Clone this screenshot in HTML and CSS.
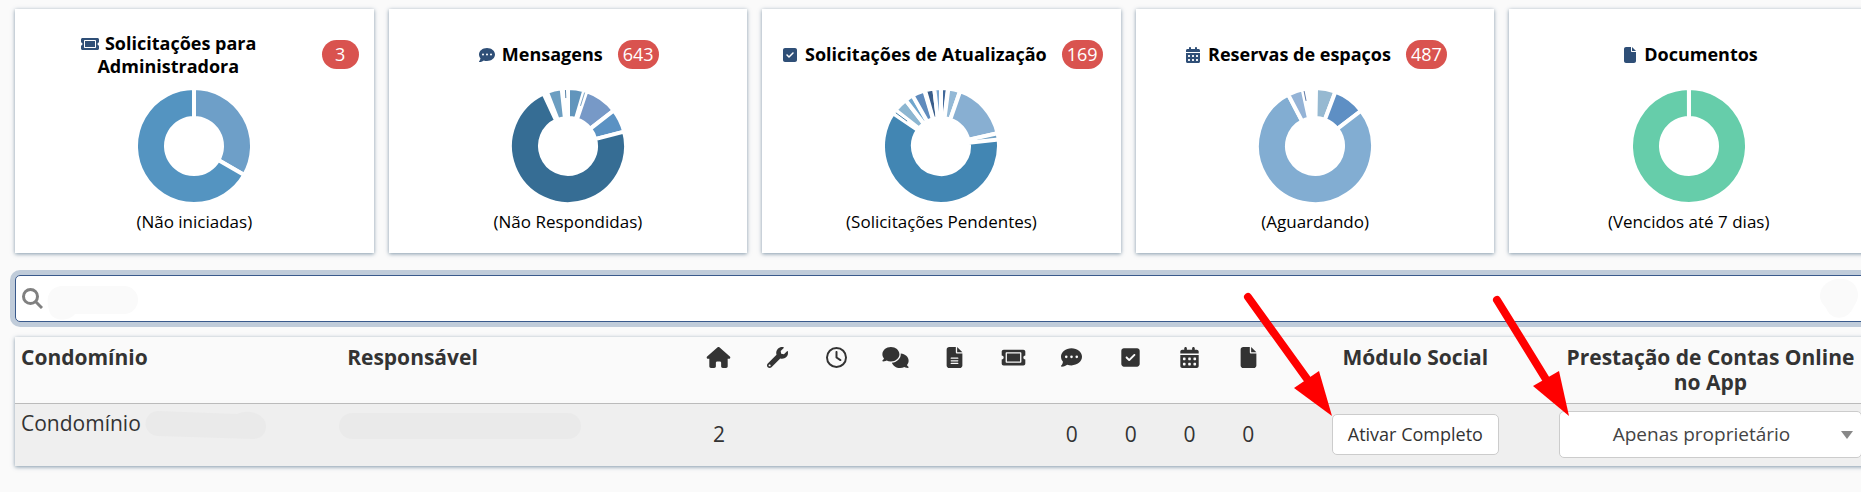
FILE: index.html
```html
<!DOCTYPE html>
<html lang="pt-BR">
<head>
  <meta charset="UTF-8" />
  <meta name="viewport" content="width=device-width, initial-scale=1.0" />
  <title>Condomínios</title>
  <link rel="stylesheet" href="styles.css">
</head>
<body>

<!-- Icon sprite -->
<svg class="sprite" aria-hidden="true">
  <symbol id="ticket" viewBox="0 0 576 512"><path d="M128 160h320v192H128V160zm400 96c0 26.51 21.49 48 48 48v96c0 26.51-21.49 48-48 48H48c-26.51 0-48-21.49-48-48v-96c26.51 0 48-21.49 48-48s-21.49-48-48-48v-96c0-26.51 21.49-48 48-48h480c26.51 0 48 21.49 48 48v96c-26.51 0-48 21.49-48 48zm-48-104c0-13.255-10.745-24-24-24H120c-13.255 0-24 10.745-24 24v208c0 13.255 10.745 24 24 24h336c13.255 0 24-10.745 24-24V152z"/></symbol>
  <symbol id="house" viewBox="0 0 576 512"><path d="M575.8 255.5c0 18-15 32.1-32 32.1h-32l.7 160.2c0 2.7-.2 5.4-.5 8.1V472c0 22.1-17.9 40-40 40H392c-22.1 0-40-17.9-40-40V384c0-17.7-14.3-32-32-32H256c-17.7 0-32 14.3-32 32v88c0 22.1-17.9 40-40 40H104c-22.1 0-40-17.9-40-40V287.6H32c-18 0-32-14-32-32.1c0-9 3-17 10-24L266.4 8c7-7 15-8 22-8s15 2 21 7L564.8 231.5c8 7 12 15 11 24z"/></symbol>
  <symbol id="wrench" viewBox="0 0 512 512"><path d="M507.73 109.1c-2.24-9.03-13.54-12.09-20.12-5.51l-74.36 74.36-67.88-11.31-11.31-67.88 74.36-74.36c6.62-6.62 3.43-17.9-5.66-20.16-47.38-11.74-99.55.91-136.58 37.93-39.64 39.64-50.55 97.1-34.05 147.2L18.74 402.76c-24.99 24.99-24.99 65.51 0 90.5 24.99 24.99 65.51 24.99 90.5 0l213.21-213.21c50.12 16.71 107.47 5.68 147.37-34.22 37.07-37.07 49.7-89.32 37.91-136.73zM64 472c-13.25 0-24-10.75-24-24 0-13.26 10.75-24 24-24s24 10.74 24 24c0 13.25-10.75 24-24 24z"/></symbol>
  <symbol id="clock" viewBox="0 0 512 512"><path d="M464 256A208 208 0 1 1 48 256a208 208 0 1 1 416 0zM0 256a256 256 0 1 0 512 0A256 256 0 1 0 0 256zM232 120V256c0 8 4 15.5 10.7 20l96 64c11 7.4 25.9 4.4 33.3-6.7s4.4-25.9-6.7-33.3L280 243.2V120c0-13.3-10.7-24-24-24s-24 10.7-24 24z"/></symbol>
  <symbol id="comments" viewBox="0 0 640 512"><path d="M208 352c114.9 0 208-78.8 208-176S322.9 0 208 0S0 78.8 0 176c0 38.6 14.7 74.3 39.6 103.4c-3.5 9.4-8.7 17.7-14.2 24.7c-4.8 6.2-9.7 11-13.3 14.3c-1.8 1.6-3.3 2.9-4.3 3.7c-.5 .4-.9 .7-1.1 .8l-.2 .2C1 327.2-1.4 334.4 .8 340.9S9.1 352 16 352c21.8 0 43.8-5.6 62.1-12.5c9.2-3.5 17.8-7.4 25.2-11.4C134.1 343.3 169.8 352 208 352zM448 176c0 112.3-99.1 196.9-216.5 207C255.8 457.4 336.4 512 432 512c38.2 0 73.9-8.7 104.7-23.9c7.5 4 16 7.9 25.2 11.4c18.3 6.9 40.3 12.5 62.1 12.5c6.9 0 13.1-4.5 15.2-11.1c2.1-6.6-.2-13.8-5.8-17.9l-.2-.2c-.2-.2-.6-.4-1.1-.8c-1-.8-2.5-2-4.3-3.7c-3.6-3.3-8.5-8.1-13.3-14.3c-5.5-7-10.7-15.4-14.2-24.7c24.9-29 39.6-64.7 39.6-103.4c0-92.8-84.9-168.9-192.6-175.5c.4 5.1 .6 10.3 .6 15.5z"/></symbol>
  <symbol id="file-lines" viewBox="0 0 384 512"><path d="M64 0C28.7 0 0 28.7 0 64V448c0 35.3 28.7 64 64 64H320c35.3 0 64-28.7 64-64V160H256c-17.7 0-32-14.3-32-32V0H64zM256 0V128H384L256 0zM112 256H272c8.8 0 16 7.2 16 16s-7.2 16-16 16H112c-8.8 0-16-7.2-16-16s7.2-16 16-16zm0 64H272c8.8 0 16 7.2 16 16s-7.2 16-16 16H112c-8.8 0-16-7.2-16-16s7.2-16 16-16zm0 64H272c8.8 0 16 7.2 16 16s-7.2 16-16 16H112c-8.8 0-16-7.2-16-16s7.2-16 16-16z"/></symbol>
  <symbol id="message" viewBox="0 0 512 512"><path d="M256 448c141.4 0 256-93.1 256-208S397.4 32 256 32S0 125.1 0 240c0 45.1 17.7 86.8 47.7 120.9c-1.9 24.5-11.4 46.3-21.4 62.9c-5.5 9.2-11.1 16.6-15.2 21.6c-2.1 2.5-3.7 4.4-4.9 5.7c-.6 .6-1 1.1-1.3 1.4l-.3 .3c-4.6 4.6-5.9 11.4-3.4 17.4c2.5 6 8.3 9.9 14.8 9.9c28.7 0 57.6-8.9 81.6-19.3c22.9-10 42.4-21.9 54.3-30.6c31.8 11.5 67 17.9 104.1 17.9zM128 208a32 32 0 1 1 0 64 32 32 0 1 1 0-64zm128 0a32 32 0 1 1 0 64 32 32 0 1 1 0-64zm96 32a32 32 0 1 1 64 0 32 32 0 1 1 -64 0z"/></symbol>
  <symbol id="check" viewBox="0 0 448 512"><path d="M64 32C28.7 32 0 60.7 0 96V416c0 35.3 28.7 64 64 64H384c35.3 0 64-28.7 64-64V96c0-35.3-28.7-64-64-64H64zM337 209L209 337c-9.4 9.4-24.6 9.4-33.9 0l-64-64c-9.4-9.4-9.4-24.6 0-33.9s24.6-9.4 33.9 0l47 47L303 175c9.4-9.4 24.6-9.4 33.9 0s9.4 24.6 0 33.9z"/></symbol>
  <symbol id="calendar" viewBox="0 0 448 512"><path d="M128 0c17.7 0 32 14.3 32 32V64H288V32c0-17.7 14.3-32 32-32s32 14.3 32 32V64h48c26.5 0 48 21.5 48 48v48H0V112C0 85.5 21.5 64 48 64H96V32c0-17.7 14.3-32 32-32zM0 192H448V464c0 26.5-21.5 48-48 48H48c-26.5 0-48-21.5-48-48V192zm64 80v32c0 8.8 7.2 16 16 16h32c8.8 0 16-7.2 16-16V272c0-8.8-7.2-16-16-16H80c-8.8 0-16 7.2-16 16zm128 0v32c0 8.8 7.2 16 16 16h32c8.8 0 16-7.2 16-16V272c0-8.8-7.2-16-16-16H208c-8.8 0-16 7.2-16 16zm144-16c-8.8 0-16 7.2-16 16v32c0 8.8 7.2 16 16 16h32c8.8 0 16-7.2 16-16V272c0-8.8-7.2-16-16-16H336zM64 400v32c0 8.8 7.2 16 16 16h32c8.8 0 16-7.2 16-16V400c0-8.8-7.2-16-16-16H80c-8.8 0-16 7.2-16 16zm144-16c-8.8 0-16 7.2-16 16v32c0 8.8 7.2 16 16 16h32c8.8 0 16-7.2 16-16V400c0-8.8-7.2-16-16-16H208zm112 16v32c0 8.8 7.2 16 16 16h32c8.8 0 16-7.2 16-16V400c0-8.8-7.2-16-16-16H336c-8.8 0-16 7.2-16 16z"/></symbol>
  <symbol id="file" viewBox="0 0 384 512"><path d="M0 64C0 28.7 28.7 0 64 0H224V128c0 17.7 14.3 32 32 32H384V448c0 35.3-28.7 64-64 64H64c-35.3 0-64-28.7-64-64V64zm384 64H256V0L384 128z"/></symbol>
</svg>

<main class="page">
  <section class="cards">
    <article class="card">
      <header class="card--header">
        <h2 class="card--title"><svg class="icon"><use href="#ticket"/></svg> Solicitações para Administradora</h2>
        <span class="badge">3</span>
      </header>
      <svg class="donut" data-chart="solicitacoes" viewBox="-60 -60 120 120"></svg>
      <p class="card--label">(Não iniciadas)</p>
    </article>
    <article class="card">
      <header class="card--header">
        <h2 class="card--title"><svg class="icon"><use href="#message"/></svg> Mensagens</h2>
        <span class="badge">643</span>
      </header>
      <svg class="donut" data-chart="mensagens" viewBox="-60 -60 120 120"></svg>
      <p class="card--label">(Não Respondidas)</p>
    </article>
    <article class="card">
      <header class="card--header">
        <h2 class="card--title"><svg class="icon"><use href="#check"/></svg> Solicitações de Atualização</h2>
        <span class="badge">169</span>
      </header>
      <svg class="donut" data-chart="atualizacao" viewBox="-60 -60 120 120"></svg>
      <p class="card--label">(Solicitações Pendentes)</p>
    </article>
    <article class="card">
      <header class="card--header">
        <h2 class="card--title"><svg class="icon"><use href="#calendar"/></svg> Reservas de espaços</h2>
        <span class="badge">487</span>
      </header>
      <svg class="donut" data-chart="reservas" viewBox="-60 -60 120 120"></svg>
      <p class="card--label">(Aguardando)</p>
    </article>
    <article class="card">
      <header class="card--header">
        <h2 class="card--title"><svg class="icon"><use href="#file"/></svg> Documentos</h2>
      </header>
      <svg class="donut" data-chart="documentos" viewBox="-60 -60 120 120"></svg>
      <p class="card--label">(Vencidos até 7 dias)</p>
    </article>
  </section>

  <label class="search">
    <svg class="search--icon" viewBox="0 0 21 21"><circle cx="8.5" cy="8.5" r="7"/><path d="M13.500 13.500L20 20"/></svg>
    <svg class="search--mask" viewBox="0 0 91 34"><path d="M14 0H77a14 14 0 0 1 0 28H28C22 36 4 36 2 24C-1 14 0 2 14 0z"/></svg>
    <input class="search--input" type="text" aria-label="Pesquisar">
    <svg class="search--dot" viewBox="0 0 38 39"><path d="M19 0C31-1 38 7 38 16C38 22 35 25 33 29C27 42 11 42 6 29C4 26 0 23 0 17C0 8 8 0 19 0z"/></svg>
  </label>

  <table class="list">
    <colgroup>
      <col class="col--name">
      <col class="col--owner">
      <col class="col--count" span="10">
      <col class="col--module">
      <col class="col--account">
    </colgroup>
    <thead>
      <tr>
        <th class="left">Condomínio</th>
        <th class="left">Responsável</th>
        <th><svg class="icon"><use href="#house"/></svg></th>
        <th><svg class="icon"><use href="#wrench"/></svg></th>
        <th><svg class="icon"><use href="#clock"/></svg></th>
        <th><svg class="icon"><use href="#comments"/></svg></th>
        <th><svg class="icon"><use href="#file-lines"/></svg></th>
        <th><svg class="icon"><use href="#ticket"/></svg></th>
        <th><svg class="icon"><use href="#message"/></svg></th>
        <th><svg class="icon"><use href="#check"/></svg></th>
        <th><svg class="icon"><use href="#calendar"/></svg></th>
        <th><svg class="icon"><use href="#file"/></svg></th>
        <th>Módulo Social</th>
        <th>Prestação de Contas Online no App</th>
      </tr>
    </thead>
    <tbody>
      <tr>
        <td class="left">
          <div class="name">Condomínio
            <svg class="name--mask" viewBox="0 0 121 29"><path d="M13 0L92 3C105-3 121 4 121 15C121 23 116 28 108 28L13 25A12 12 0 0 1 13 0z"/></svg>
          </div>
        </td>
        <td class="left"><div class="owner--mask"></div></td>
        <td>2</td>
        <td></td>
        <td></td>
        <td></td>
        <td></td>
        <td></td>
        <td>0</td>
        <td>0</td>
        <td>0</td>
        <td>0</td>
        <td>
          <div class="target">
            <button class="button" type="button">Ativar Completo</button>
            <svg class="arrow" viewBox="0 0 90 124"><path class="arrow--line" d="M6 7L68 93"/><path d="M90 126L52 98L77 81z"/></svg>
          </div>
        </td>
        <td>
          <div class="target target--wide">
            <select class="select" aria-label="Prestação de Contas Online no App">
              <option>Apenas proprietário</option>
            </select>
            <svg class="caret" viewBox="0 0 12 8"><path d="M0 0H12L6 8z"/></svg>
            <svg class="arrow" viewBox="0 0 90 124"><path class="arrow--line" d="M28 13L78 94"/><path d="M100 129L64 99L90 84z"/></svg>
          </div>
        </td>
      </tr>
    </tbody>
  </table>
</main>

<script>
  // each slice: start angle, end angle, colour
  const charts = {
    solicitacoes: [[0, 120, '#6e9fc8'], [120, 360, '#5494c1']],
    mensagens: [
      [0, 16.4, '#6195bc'], [18.6, 52.2, '#7799c7'], [52.2, 75.7, '#5b92c3'],
      [75.7, 335, '#366d94'], [338.7, 353.7, '#6c9ec1']
    ],
    atualizacao: [
      [0, 6.8, '#41689a'], [7.3, 19.2, '#94b9d6'], [19.2, 77.3, '#88afd2'],
      [77.3, 84, '#6fa0c4'], [83.5, 304.4, '#4286b3'], [308.3, 322.4, '#8cb6d1'],
      [322.4, 331, '#6fa6cd'], [330.6, 343.2, '#5f8bbd'], [344, 353.3, '#3a5e8b'],
      [353.3, 360, '#7ca8d2']
    ],
    reservas: [
      [1, 20.6, '#96b9d1'], [20.6, 52.6, '#5e8fc4'], [52.6, 332.5, '#82add2'],
      [332.5, 347.7, '#94b3d6']
    ],
    documentos: [[0, 359.9, '#66cdaa']]
  };

  // slices too small for a sector: angle, inner radius, colour
  const slivers = {
    mensagens: [[17.3, 42, '#7fa6c6'], [357.4, 48, '#5b84a8']],
    atualizacao: [[306.3, 42, '#4a83a8']],
    reservas: [[348.8, 46, '#5f7aa8']]
  };

  const point = (angle, radius) => {
    const rad = angle * Math.PI / 180;
    return `${radius * Math.sin(rad)} ${-radius * Math.cos(rad)}`;
  };

  const slicePath = ([start, end, color]) => {
    const large = end - start > 180 ? 1 : 0;
    return `<path class="slice" fill="${color}" d="M${point(start, 58)}A58 58 0 ${large} 1 ${point(end, 58)}` +
      `L${point(end, 28)}A28 28 0 ${large} 0 ${point(start, 28)}z"/>`;
  };

  const sliverPath = ([angle, radius, color]) =>
    `<path class="sliver" stroke="${color}" d="M${point(angle, radius)}L${point(angle, 56)}"/>`;

  document.querySelectorAll('.donut').forEach(donut => {
    const name = donut.dataset.chart;
    donut.innerHTML = charts[name].map(slicePath).join('') + (slivers[name] || []).map(sliverPath).join('');
  });
</script>

</body>
</html>
```

FILE: styles.css
```css
* {
  box-sizing: border-box;
}

body {
  margin: 0;
  overflow-x: hidden;
  font-family: "Open Sans", "Noto Sans", sans-serif;
  font-size: 21px;
  line-height: 25px;
  color: #333;
  background-color: #fafafa;
}

.sprite {
  display: none;
}

.page {
  margin-right: -7px;
  padding: 9px 0 24px 15px;
}

.icon {
  fill: currentColor;
}

/* Cards */
.cards {
  display: grid;
  grid-template-columns: repeat(5, 1fr);
  gap: 15px;
}

.card {
  display: flex;
  flex-direction: column;
  align-items: center;
  padding: 20px 15px;
  color: #000;
  background-color: #fff;
  box-shadow: 0 1px 4px rgba(50, 85, 115, 0.6);
}

.card--header {
  display: flex;
  align-items: center;
  justify-content: center;
  gap: 15px;
  width: 100%;
  height: 51px;
}

.card--title {
  margin: 0;
  font-size: 18px;
  line-height: 23px;
  text-align: center;
}

.card--title .icon {
  width: 20px;
  height: 16px;
  vertical-align: -2px;
  color: #2f4f77;
}

.badge {
  min-width: 37px;
  padding: 2px 5px;
  border-radius: 15px;
  font-size: 18px;
  text-align: center;
  color: #fff;
  background-color: #d9534f;
}

.donut {
  width: 120px;
  height: 120px;
  margin-top: 6px;
}

.slice {
  stroke: #fff;
  stroke-width: 4;
}

.card--label {
  margin: 4px 0 0;
  font-size: 17px;
  line-height: 23px;
}

/* Search */
.search {
  display: flex;
  align-items: center;
  gap: 4px;
  height: 47px;
  margin-top: 22px;
  padding: 0 9px 0 6px;
  border: 1px solid #3a5a8c;
  border-radius: 5px;
  background-color: #fff;
  box-shadow: 0 0 0 5px #c0ccda;
}

.search--icon {
  width: 21px;
  height: 21px;
  fill: none;
  stroke: #808080;
  stroke-width: 3;
}

.search--mask {
  width: 91px;
  height: 34px;
  margin-top: 8px;
  fill: #fafafa;
}

.search--input {
  flex: 1;
  min-width: 0;
  border: none;
  outline: none;
  font: inherit;
  background: none;
}

.search--dot {
  width: 38px;
  height: 39px;
  fill: #fafafa;
}

/* Table */
.list {
  width: 100%;
  margin-top: 15px;
  border-collapse: collapse;
  table-layout: fixed;
  box-shadow: 0 1px 4px rgba(50, 85, 115, 0.6);
}

.col--name {
  width: 17.6%;
}

.col--owner {
  width: 18.8%;
}

.col--count {
  width: 3.175%;
}

.col--module {
  width: 14.85%;
}

.list th {
  padding: 8px 6px;
  vertical-align: top;
  background-color: #fafafa;
}

.list th .icon {
  display: block;
  width: 27px;
  height: 21px;
  margin: 2px auto;
}

.list td {
  height: 62px;
  padding: 7px 6px;
  border-top: 1px solid #bbb;
  text-align: center;
  background-color: #efefef;
}

.list .left {
  text-align: left;
  vertical-align: top;
}

.name {
  display: flex;
  gap: 4px;
}

.name--mask {
  width: 121px;
  height: 29px;
  fill: #eaeaea;
}

.owner--mask {
  width: 242px;
  height: 26px;
  margin: 2px 0 0 -8px;
  border-radius: 13px;
  background-color: #eaeaea;
}

.target {
  position: relative;
  display: inline-block;
  vertical-align: middle;
}

.target--wide {
  display: block;
}

.button,
.select {
  border: 1px solid #ccc;
  border-radius: 5px;
  font: inherit;
  color: #333;
  background-color: #fff;
}

.button {
  display: block;
  padding: 7px 15px;
  font-size: 18px;
}

.select {
  display: block;
  width: 100%;
  height: 47px;
  padding: 0 24px 0 6px;
  appearance: none;
  font-size: 19px;
  text-align-last: center;
  color: #444;
}

.caret {
  position: absolute;
  top: 20px;
  right: 9px;
  width: 12px;
  height: 8px;
  fill: #888;
  pointer-events: none;
}

/* Pointers over the controls */
.arrow {
  position: absolute;
  right: 100%;
  bottom: 100%;
  width: 90px;
  height: 124px;
  overflow: visible;
  fill: #f00;
  pointer-events: none;
}

.arrow--line {
  stroke: #f00;
  stroke-width: 8;
  stroke-linecap: round;
}
```
